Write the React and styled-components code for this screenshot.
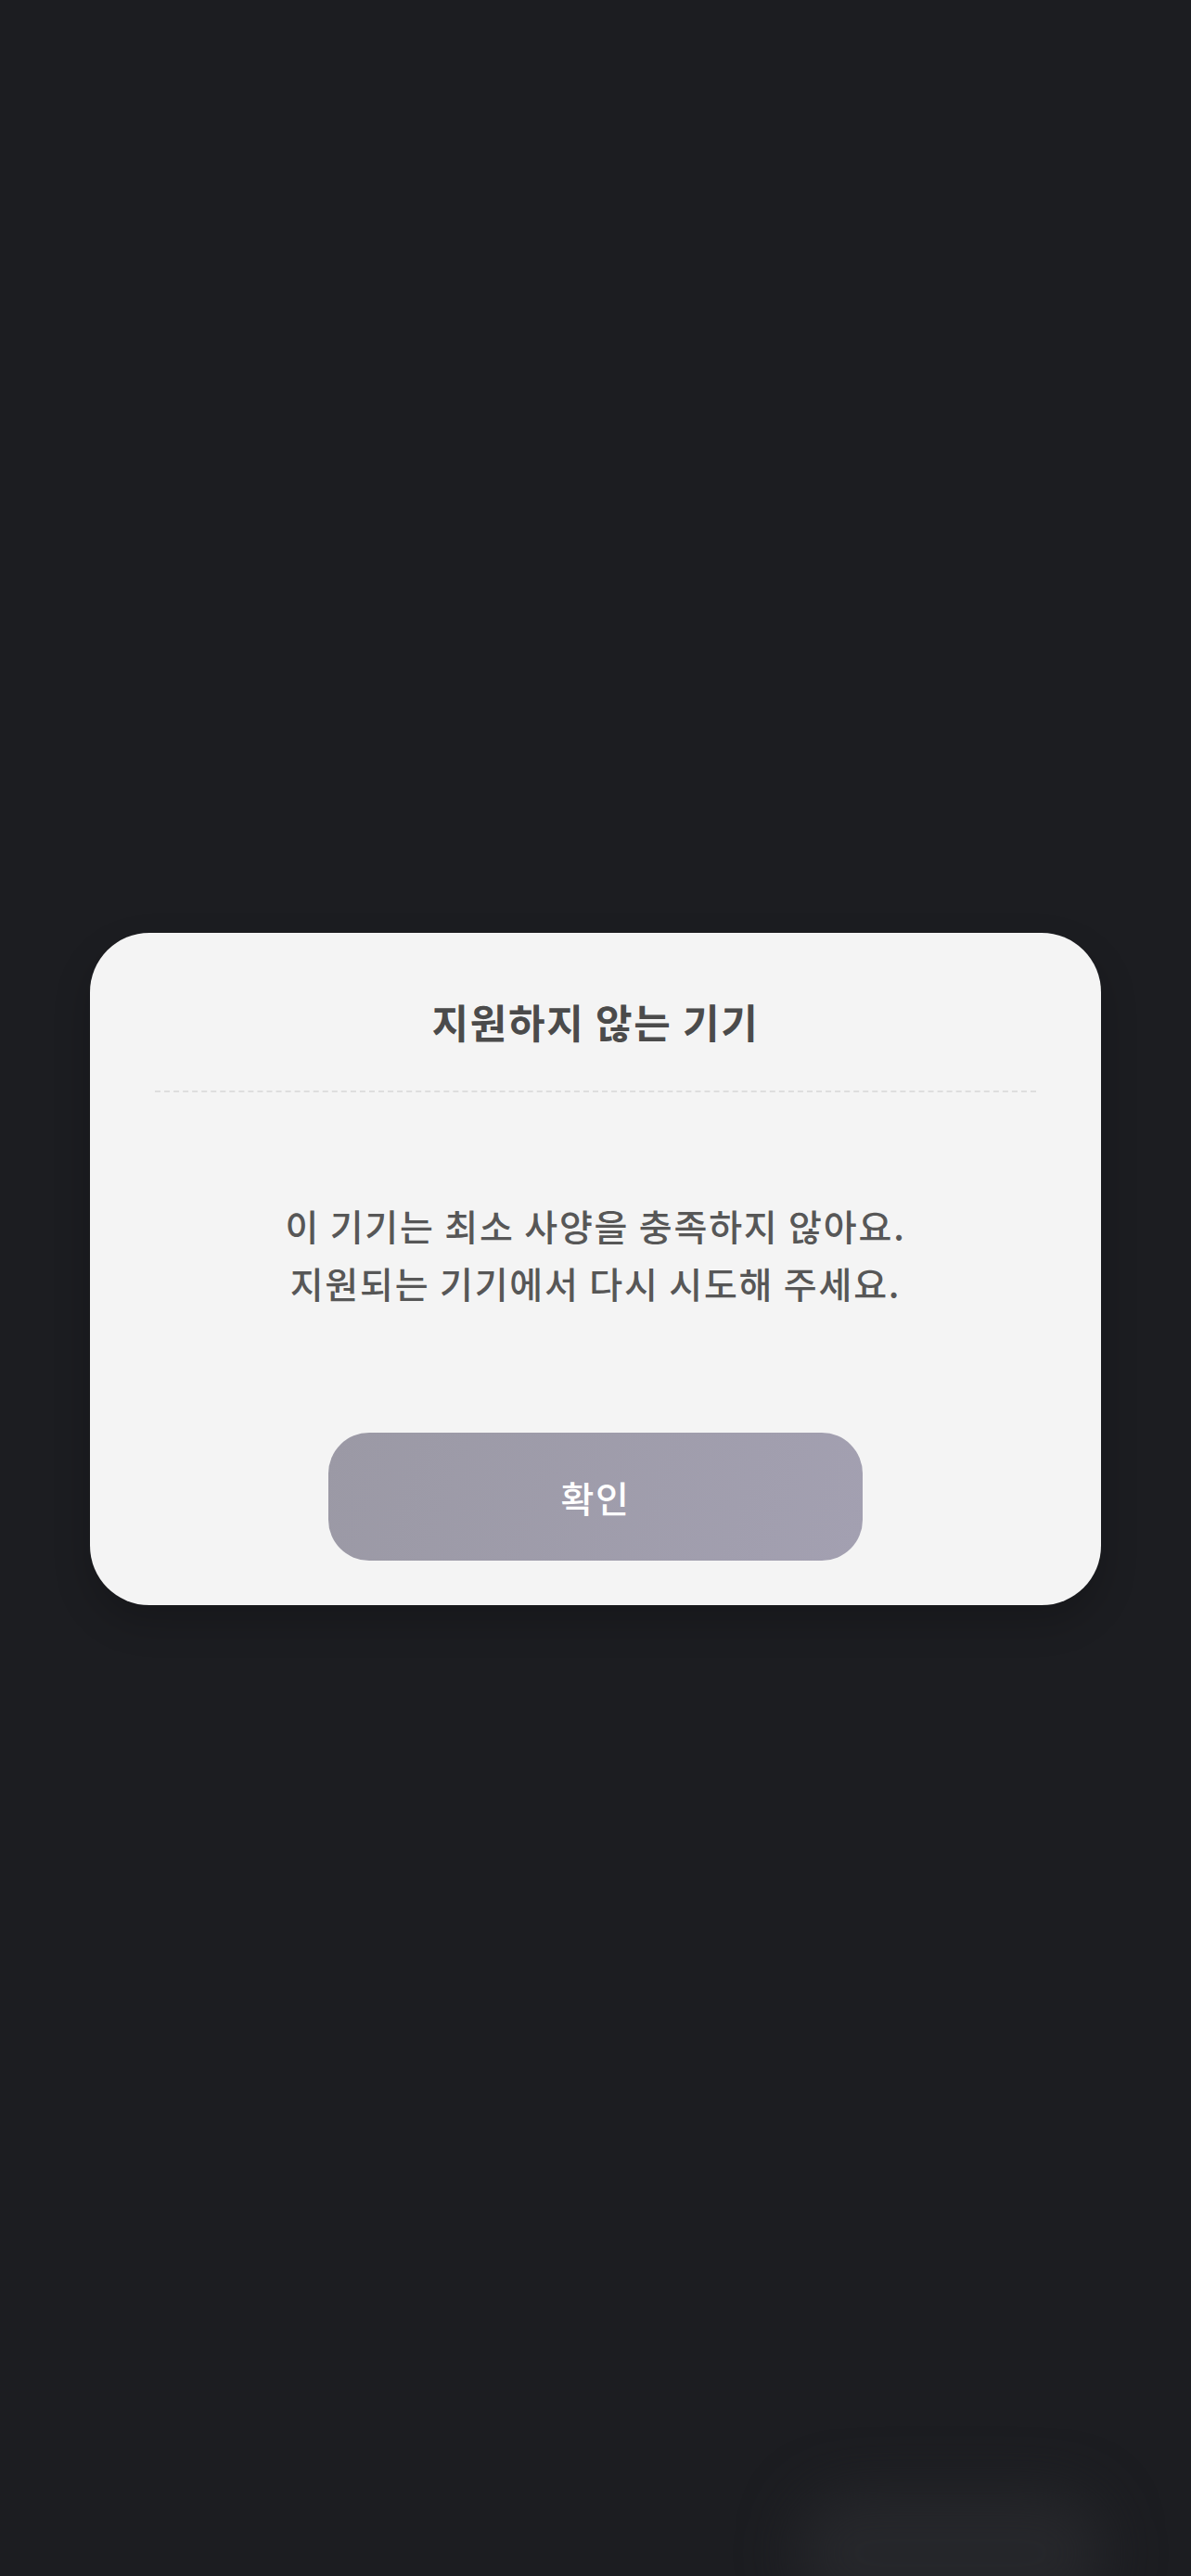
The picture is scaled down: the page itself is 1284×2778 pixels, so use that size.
import styled, { createGlobalStyle } from 'styled-components'

const GlobalStyle = createGlobalStyle`
  html, body {
    margin: 0;
    padding: 0;
    background: #1c1d21;
  }
  body {
    font-family: "Noto Sans CJK KR", "Noto Sans", sans-serif;
  }
`

const Page = styled.main`
  position: relative;
  width: 100%;
  min-height: 2778px;
  box-sizing: border-box;
  padding: 0 97px 42px;
  display: flex;
  flex-direction: column;
  justify-content: center;
  align-items: center;
  background: #1c1d21;
  overflow: hidden;
`

const Glow = styled.div`
  position: absolute;
  left: 860px;
  bottom: -40px;
  width: 330px;
  height: 130px;
  border-radius: 60px;
  background: #26272b;
  filter: blur(30px);
`

const Card = styled.section`
  width: 100%;
  box-sizing: border-box;
  padding: 65px 70px 48px;
  background: #f4f4f4;
  border-radius: 64px;
  box-shadow: 0 18px 40px rgba(0, 0, 0, 0.2);
  display: flex;
  flex-direction: column;
  align-items: center;
`

const Title = styled.h2`
  margin: 0;
  font-size: 43px;
  line-height: 60px;
  font-weight: 700;
  color: #4b4b4b;
  letter-spacing: 1.7px;
`

const Divider = styled.hr`
  width: 100%;
  margin: 45px 0 0;
  border: none;
  border-top: 2px dashed #dedede;
`

const Message = styled.p`
  margin: 112px 0 0;
  font-size: 39px;
  line-height: 62px;
  font-weight: 500;
  color: #575757;
  text-align: center;
  letter-spacing: 1.8px;
`

const ConfirmButton = styled.button`
  margin-top: 131px;
  width: 576px;
  height: 138px;
  border: none;
  border-radius: 44px;
  background: linear-gradient(110deg, #9b99a5 0%, #a3a0b1 100%);
  color: #ffffff;
  font-family: inherit;
  font-size: 39px;
  font-weight: 500;
  letter-spacing: 1.5px;
  cursor: pointer;
`

const App = () => {
  return (
    <>
      <GlobalStyle />
      <Page>
        <Card>
          <Title>지원하지 않는 기기</Title>
          <Divider />
          <Message>
            이 기기는 최소 사양을 충족하지 않아요.
            <br />
            지원되는 기기에서 다시 시도해 주세요.
          </Message>
          <ConfirmButton>확인</ConfirmButton>
        </Card>
        <Glow />
      </Page>
    </>
  )
}

export default App
